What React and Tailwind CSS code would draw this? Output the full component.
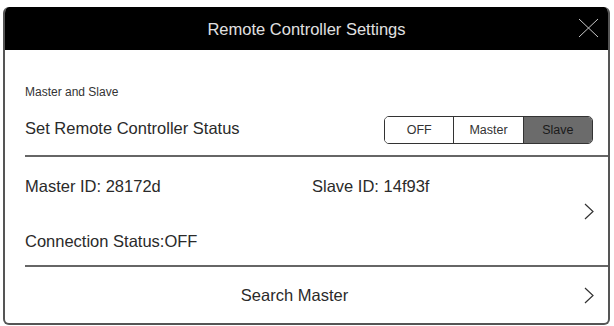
import React, { useState } from 'react';

const font = { fontFamily: '"Liberation Sans", Arial, sans-serif' };

const Chevron = () => (
  <svg width="10" height="17" viewBox="0 0 10 17" fill="none" className="shrink-0">
    <path d="M1 1 L9 8.5 L1 16" stroke="#333" strokeWidth="1.2" />
  </svg>
);

const Segmented = ({ value, onChange }) => {
  const opts = ['OFF', 'Master', 'Slave'];
  return (
    <div className="flex h-[28px] w-[209px] rounded-[5px] border border-[#333] overflow-hidden">
      {opts.map((o, i) => (
        <button
          key={o}
          onClick={() => onChange(o)}
          className={`flex-1 flex items-center justify-center text-[12.5px] ${
            i > 0 ? 'border-l border-[#333]' : ''
          } ${value === o ? 'bg-[#6b6b6b] text-[#1a1a1a]' : 'bg-white text-[#333]'}`}
        >
          {o}
        </button>
      ))}
    </div>
  );
};

export default function App() {
  const [status, setStatus] = useState('Slave');

  return (
    <div className="bg-white w-[614px] h-[326px] pt-[7px] pl-[3px]" style={font}>
      <div className="w-[607px] h-[318px] rounded-[6px] border-2 border-[#555] border-t-0 flex flex-col overflow-hidden">
        <div className="relative h-[43px] bg-black flex items-center justify-center shrink-0">
          <span className="text-[16.5px] text-[#e0e0e0] mt-[1px]">Remote Controller Settings</span>
          <svg className="absolute right-[9px] top-[11px]" width="21" height="20" viewBox="0 0 21 20">
            <path d="M1 1 L20 19 M20 1 L1 19" stroke="#c8c8c8" strokeWidth="1" />
          </svg>
        </div>

        <div className="pl-[20px]">
          <div className="pt-[35px] pr-[15px] pb-[11px] border-b-2 border-[#666]">
            <p className="text-[12px] leading-[14px] text-[#333]">Master and Slave</p>
            <div className="mt-[17px] flex items-center justify-between">
              <span className="text-[16.5px] text-[#2a2a2a] -mt-[3px]">Set Remote Controller Status</span>
              <Segmented value={status} onChange={setStatus} />
            </div>
          </div>

          <div className="h-[110px] pr-[14px] flex items-center justify-between border-b-2 border-[#666]">
            <div className="flex flex-col gap-[35px] mt-[5px] text-[16.5px] leading-[20px] text-[#2a2a2a]">
              <div className="flex">
                <span className="w-[287px]">Master ID: 28172d</span>
                <span>Slave ID: 14f93f</span>
              </div>
              <span>Connection Status:OFF</span>
            </div>
            <Chevron />
          </div>

          <div className="h-[57px] pr-[14px] flex items-center">
            <span className="flex-1 text-center text-[16.5px] text-[#2a2a2a] -ml-[20px]">Search Master</span>
            <Chevron />
          </div>
        </div>
      </div>
    </div>
  );
}
